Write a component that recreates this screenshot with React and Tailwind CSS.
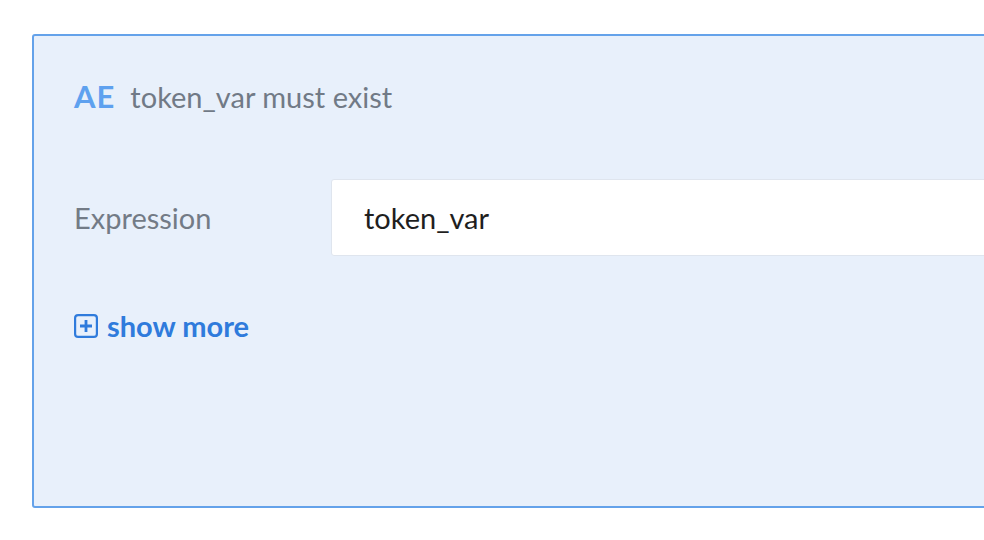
export default function App() {
  return (
    <div className="w-[984px] h-[540px] overflow-hidden bg-white" style={{ fontFamily: 'Lato, "Open Sans", sans-serif' }}>
      <div className="ml-[32px] mt-[34px] w-[1000px] h-[474px] rounded-[3px] border-2 border-[#64a2ea] bg-[#e8f0fb] pl-[40px]">
        <div className="flex items-baseline gap-[15px] pt-[45px] h-[75px]">
          <span className="text-[31px] font-bold text-[#5ea1ef] leading-none tracking-[1px]">AE</span>
          <span className="text-[29px] text-[#717a86] leading-none">token_var must exist</span>
        </div>
        <div className="flex items-center mt-[68px]">
          <div className="w-[257px] text-[29px] text-[#737b86] leading-none">Expression</div>
          <div className="flex-1 h-[77px] flex items-center rounded-[3px] bg-white border border-[#dfe5ee] pl-[32px] text-[29px] text-[#1f1f1f] leading-none">
            token_var
          </div>
        </div>
        <div className="flex items-center gap-[9px] mt-[55px]">
          <svg width="24" height="24" viewBox="0 0 24 24" fill="none">
            <rect x="1.1" y="1.1" width="21.8" height="21.8" rx="3" stroke="#2f7bdc" strokeWidth="2.2" />
            <path d="M12 6v12M6 12h12" stroke="#2f7bdc" strokeWidth="2.8" />
          </svg>
          <span className="text-[29px] font-bold text-[#2f7bdc] leading-none">show more</span>
        </div>
      </div>
    </div>
  );
}
